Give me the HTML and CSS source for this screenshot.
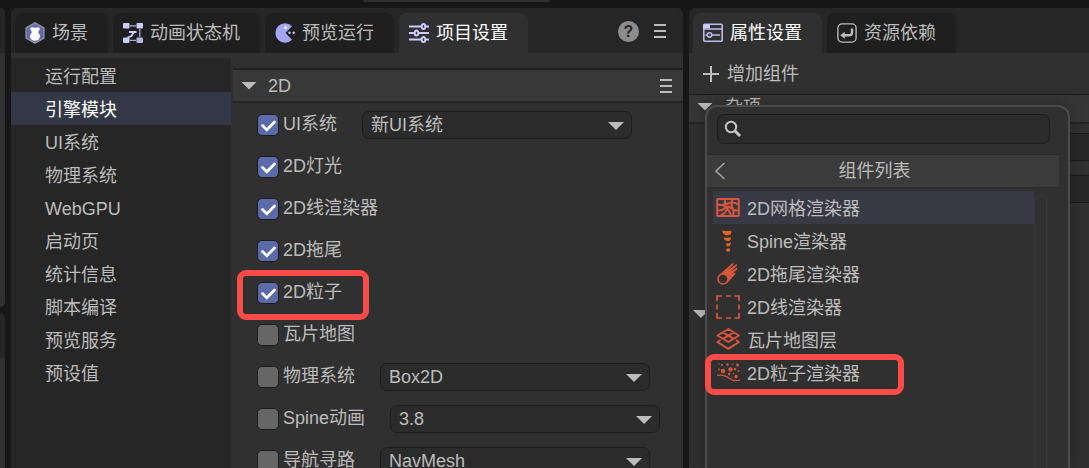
FILE: index.html
```html
<!DOCTYPE html>
<html lang="zh-CN">
<head>
    <meta charset="UTF-8">
    <meta name="viewport" content="width=device-width, initial-scale=1.0">
    <title>项目设置</title>
    <link rel="stylesheet" href="styles.css">
</head>
<body>

    <div class="top-strip"><div class="top-field"></div></div>

    <div class="workspace">
        <div class="side-docks">
            <div class="dock dock-upper"></div>
            <div class="dock dock-lower"></div>
        </div>

        <main class="panel">
            <div class="tab-bar">
                <button class="tab">
                    <svg class="icon" viewBox="0 0 20 22">
                        <path d="M10 .8l8.900 5v10.400l-8.900 5-8.900-5V5.800z" fill="#6468ad" stroke="#8f92a8" stroke-width="1.400"/>
                        <circle cx="7" cy="7" r="1.800" fill="#fff"/>
                        <circle cx="13" cy="7" r="1.800" fill="#fff"/>
                        <circle cx="10" cy="9" r="3.600" fill="#fff"/>
                        <ellipse cx="10" cy="14.300" rx="5" ry="4.400" fill="#fff"/>
                    </svg>
                    <span>场景</span>
                </button>
                <button class="tab">
                    <svg class="icon" viewBox="0 0 20 20">
                        <g fill="#c9ccff"><rect width="6.500" height="5.500" rx="1"/><rect x="13.500" width="6.500" height="5.500" rx="1"/><rect y="14.500" width="6.500" height="5.500" rx="1"/><rect x="13.500" y="14.500" width="6.500" height="5.500" rx="1" fill="#b3b6e0"/></g>
                        <path d="M7 2.800h6M16.800 6v8M7 17.300h6" fill="none" stroke="#a9acd8" stroke-width="1.300"/>
                        <path d="M6 9h7.500M10.500 9.500l-2 3.500-4 1.500" fill="none" stroke="#c9ccff" stroke-width="1.800"/>
                    </svg>
                    <span>动画状态机</span>
                </button>
                <button class="tab">
                    <svg class="icon" viewBox="0 0 20 20">
                        <path d="M17 3.200A9.700 9.700 0 1 0 17 16.800L10.500 10z" fill="#a3a6f2"/>
                        <circle cx="10.500" cy="4.500" r="1.500" fill="#fff"/>
                        <circle cx="14.500" cy="9.800" r="1.200" fill="#c9ccff"/>
                        <circle cx="18.700" cy="9.800" r="1.200" fill="#c9ccff"/>
                    </svg>
                    <span>预览运行</span>
                </button>
                <button class="tab active">
                    <svg class="icon" viewBox="0 0 20 20" fill="none" stroke="#c9ccff" stroke-width="2">
                        <path d="M0 3.500h12M17 3.500h3M0 10h5M10 10h10M0 16.500h12M17 16.500h3"/>
                        <ellipse cx="14.500" cy="3.500" rx="1.800" ry="2.600"/>
                        <ellipse cx="7.500" cy="10" rx="1.800" ry="2.600"/>
                        <ellipse cx="14.500" cy="16.500" rx="1.800" ry="2.600"/>
                    </svg>
                    <span>项目设置</span>
                </button>
                <div class="tab-tools">
                    <button class="help" aria-label="帮助">?</button>
                    <button class="menu-btn" aria-label="菜单"></button>
                </div>
            </div>

            <div class="settings">
                <nav class="sidebar">
                    <a href="#">运行配置</a>
                    <a href="#" class="selected">引擎模块</a>
                    <a href="#">UI系统</a>
                    <a href="#">物理系统</a>
                    <a href="#">WebGPU</a>
                    <a href="#">启动页</a>
                    <a href="#">统计信息</a>
                    <a href="#">脚本编译</a>
                    <a href="#">预览服务</a>
                    <a href="#">预设值</a>
                </nav>

                <section class="modules">
                    <div class="section-head">
                        <span class="arrow"></span>
                        <span class="section-title">2D</span>
                        <button class="menu-btn" aria-label="菜单"></button>
                    </div>
                    <div class="module-list">
                        <div class="module">
                            <label><input type="checkbox" checked><span>UI系统</span></label>
                            <div class="select"><select aria-label="UI系统"><option>新UI系统</option></select></div>
                        </div>
                        <div class="module">
                            <label><input type="checkbox" checked><span>2D灯光</span></label>
                        </div>
                        <div class="module">
                            <label><input type="checkbox" checked><span>2D线渲染器</span></label>
                        </div>
                        <div class="module">
                            <label><input type="checkbox" checked><span>2D拖尾</span></label>
                        </div>
                        <div class="module marked">
                            <label><input type="checkbox" checked><span>2D粒子</span></label>
                        </div>
                        <div class="module">
                            <label><input type="checkbox"><span>瓦片地图</span></label>
                        </div>
                        <div class="module">
                            <label><input type="checkbox"><span>物理系统</span></label>
                            <div class="select"><select aria-label="物理系统"><option>Box2D</option></select></div>
                        </div>
                        <div class="module">
                            <label><input type="checkbox"><span>Spine动画</span></label>
                            <div class="select"><select aria-label="Spine动画"><option>3.8</option></select></div>
                        </div>
                        <div class="module">
                            <label><input type="checkbox"><span>导航寻路</span></label>
                            <div class="select"><select aria-label="导航寻路"><option>NavMesh</option></select></div>
                        </div>
                    </div>
                </section>
            </div>
        </main>

        <aside class="panel inspector">
            <div class="tab-bar">
                <button class="tab active">
                    <svg class="icon" viewBox="0 0 20 20" fill="none" stroke="#b9bce8" stroke-width="1.600">
                        <rect x=".8" y="1.300" width="18.400" height="17" rx="1"/>
                        <path d="M1 2.500h5v2H1z" stroke="#c9ccff" stroke-width="2"/>
                        <path d="M1 6h18"/>
                        <circle cx="6.500" cy="12" r="2.200"/>
                        <path d="M9 12h8M2.500 12h1.500"/>
                    </svg>
                    <span>属性设置</span>
                </button>
                <button class="tab">
                    <svg class="icon" viewBox="0 0 22 22" fill="none" stroke="#bcbcbc">
                        <rect x="1" y="1" width="20" height="20" rx="4.500" stroke-width="1.500"/>
                        <path d="M16.500 6v4.500q0 3-3 3H7" stroke-width="2.600"/>
                        <path d="M3.500 13.500l5-3.800v7.600z" fill="#bcbcbc" stroke="none"/>
                    </svg>
                    <span>资源依赖</span>
                </button>
            </div>

            <button class="add-component">
                <svg width="18" height="18" viewBox="0 0 18 18"><path d="M9 1v16M1 9h16" stroke="#bcbcbc" stroke-width="2"/></svg>
                <span>增加组件</span>
            </button>
            <div class="prop-head"><span class="arrow"></span><span>杂项</span></div>
            <div class="prop-fields">
                <input type="text" aria-label="杂项 1">
                <input type="text" aria-label="杂项 2">
            </div>
            <div class="prop-group"><span class="arrow"></span></div>

            <div class="popup">
                <div class="search">
                    <svg width="18" height="18" viewBox="0 0 18 18" fill="none" stroke="#c4c4c4">
                        <circle cx="7" cy="7" r="5.200" stroke-width="2"/>
                        <path d="M11 11l5 5" stroke-width="3"/>
                    </svg>
                    <input type="search" aria-label="组件列表">
                </div>
                <div class="popup-head">
                    <button class="back" aria-label="返回">
                        <svg width="12" height="18" viewBox="0 0 12 18"><path d="M10.500 1L2 9l8.500 8" fill="none" stroke="#a0a0a0" stroke-width="1.600"/></svg>
                    </button>
                    <span>组件列表</span>
                </div>
                <div class="popup-body">
                    <div class="component-list">
                        <button class="component current">
                            <svg viewBox="0 0 24 24" fill="none" stroke="#d9553c" stroke-width="2">
                                <rect x="1.200" y="3" width="21.600" height="17" rx="1"/>
                                <path d="M2 8.500q5 1.500 10-1t10 1M2 14.500q4 .5 7-2.500t6 0 7 2.500M8.500 3q1.500 5-.5 8M16.500 3q-2 5 0 9t.5 8M4.500 19q5-1 7.500-8M12 13l3 6"/>
                            </svg>
                            <span>2D网格渲染器</span>
                        </button>
                        <button class="component">
                            <svg viewBox="0 0 24 24" fill="#e8651f">
                                <path d="M6.500 1.500q5 1 9 0l-.5 3.800q-3 1.700-5.500.7-3-1-3-4.500zM7.500 8.500q4 .8 7.500-.3 0 3.300-2.500 3.800-4 .3-5-3.500zM10 14.500q2.500.3 5-1-.3 4-3 4-2 0-2-3z"/>
                                <ellipse cx="12.200" cy="21" rx="2.200" ry="1.700"/>
                            </svg>
                            <span>Spine渲染器</span>
                        </button>
                        <button class="component">
                            <svg viewBox="0 0 24 24">
                                <path d="M2.500 13.500L17 .8l.8 1.200-5.500 6 8-6 1 1.200-6.500 6.500 6-4.200.8 1.500-5.500 5 3-1.500.5 1.200-8 9z" fill="#d9553c"/>
                                <circle cx="7" cy="17" r="5" fill="#303030" stroke="#d9553c" stroke-width="1.600"/>
                            </svg>
                            <span>2D拖尾渲染器</span>
                        </button>
                        <button class="component">
                            <svg viewBox="0 0 24 24" fill="none" stroke="#d9553c" stroke-width="1.700">
                                <path d="M1 6V1h5M10 1h5M18.500 1H23v5M23 9.500v5M23 18v5h-4.500M15 23h-5M6 23H1v-5M1 14.500v-5"/>
                            </svg>
                            <span>2D线渲染器</span>
                        </button>
                        <button class="component">
                            <svg viewBox="0 0 24 24" fill="none" stroke="#d9553c" stroke-width="2" stroke-linejoin="round">
                                <path d="M12.300 1L23 7.500 12.300 14 1.500 7.500zM7 4.300l10.700 6.500M17.700 4.300L7 10.800M4.500 12l-3 2 10.800 6.800L23 14l-3-2"/>
                            </svg>
                            <span>瓦片地图层</span>
                        </button>
                        <button class="component marked">
                            <svg viewBox="0 0 24 24" fill="#d9553c">
                                <circle cx="7" cy="10" r="2.200"/><circle cx="14.500" cy="8.500" r="2.200"/><circle cx="20" cy="15.500" r="1.700"/>
                                <circle cx="11.500" cy="3.500" r="1.300"/><circle cx="21.500" cy="4" r="1.500"/><circle cx="6" cy="4" r="1"/><circle cx="3" cy="3" r=".7"/>
                                <circle cx="19" cy="8" r="1.200"/><circle cx="22.500" cy="10" r=".9"/><circle cx="13" cy="13" r="1.300"/><circle cx="17" cy="3" r=".8"/><circle cx="3" cy="8.500" r=".9"/><circle cx="17.500" cy="12.500" r=".8"/>
                                <path d="M1 14.500q7-1.500 12 2.500t11 2" fill="none" stroke="#d9553c" stroke-width="1.300"/>
                            </svg>
                            <span>2D粒子渲染器</span>
                        </button>
                    </div>
                    <div class="scroll-track"></div>
                </div>
            </div>
        </aside>
    </div>

</body>
</html>
```
FILE: styles.css
```css
*, *::after {
    box-sizing: border-box;
}
body {
    margin: 0;
    height: 100vh;
    display: flex;
    flex-direction: column;
    overflow: hidden;
    background: #171717;
    color: #bcbcbc;
    font-family: "Liberation Sans", "Noto Sans CJK SC", sans-serif;
    font-size: 18px;
    line-height: 24px;
}
button, input, select {
    font: inherit;
    color: inherit;
    margin: 0;
}
button {
    padding: 0;
    border: 0;
    background: none;
    cursor: pointer;
}
svg {
    display: block;
    flex: none;
}

.top-strip {
    flex: none;
    height: 8px;
    display: flex;
    justify-content: center;
    padding-right: 177px;
}
.top-field {
    width: 187px;
    height: 2px;
    background: #303030;
    border-radius: 0 0 4px 4px;
}
.workspace {
    flex: 1;
    min-height: 0;
    display: grid;
    grid-template-columns: 5px minmax(0, 1fr) 400px;
    grid-template-rows: minmax(0, 1fr);
    gap: 6px;
}

/* docks cut by the left edge */
.side-docks {
    display: flex;
    flex-direction: column;
    gap: 6px;
}
.dock {
    background: linear-gradient(#262626 45px, #303030 45px);
}
.dock-upper {
    flex: 299;
    border-radius: 0 5px 5px 0;
}
.dock-lower {
    flex: 155;
    border-radius: 0 5px 0 0;
}

.panel {
    position: relative;
    display: flex;
    flex-direction: column;
    min-width: 0;
    overflow: hidden;
    background: #303030;
    border-radius: 7px 7px 0 0;
}
.inspector {
    border-radius: 7px 0 0 0;
}
.tab-bar {
    flex: none;
    display: flex;
    gap: 5px;
    height: 45px;
    padding: 5px 17px 0 4px;
    background: #262626;
}
.tab {
    display: flex;
    align-items: center;
    gap: 7px;
    padding: 0 20px 0 10px;
    background: #1f1f1f;
    border-radius: 8px 8px 0 0;
    white-space: nowrap;
}
.tab.active {
    background: #303030;
    color: #fff;
}
.icon {
    width: 20px;
    height: 22px;
}
.tab-tools {
    display: flex;
    align-items: center;
    gap: 15px;
    margin-left: auto;
    padding-bottom: 4px;
}
.help {
    width: 21px;
    height: 21px;
    border-radius: 50%;
    background: #8c8c8c;
    color: #262626;
    font-size: 16px;
    font-weight: bold;
    line-height: 21px;
}
.menu-btn {
    width: 12px;
    height: 14px;
    background: repeating-linear-gradient(#bcbcbc 0 2px, transparent 2px 6px);
}

.settings {
    flex: 1;
    min-height: 0;
    display: flex;
    gap: 2px;
    padding-top: 5px;
}
.sidebar {
    flex: none;
    width: 220px;
    padding-top: 1px;
    background: #262626;
}
.sidebar a {
    display: block;
    height: 33px;
    padding-left: 34px;
    color: inherit;
    line-height: 36px;
    text-decoration: none;
}
.sidebar a.selected {
    background: #323845;
    color: #fff;
}

.modules {
    flex: 1;
    min-width: 0;
    padding-top: 10px;
}
.section-head {
    display: flex;
    align-items: center;
    height: 35px;
    padding: 0 11px 0 8px;
    background: #383838;
    border-top: 2px solid #222;
    border-bottom: 2px solid #262626;
}
.section-title {
    margin-left: 11px;
}
.section-head .menu-btn {
    margin-left: auto;
}
.arrow {
    flex: none;
    width: 16px;
    height: 8px;
    background: #bcbcbc;
    clip-path: polygon(0 0, 100% 0, 50% 100%);
}
.module-list {
    padding: 1px 0 0 24px;
}
.module {
    position: relative;
    display: flex;
    align-items: center;
    gap: 25px;
    height: 42px;
}
.module label {
    display: flex;
    align-items: center;
    gap: 4px;
    white-space: nowrap;
}
.module label span {
    padding-bottom: 2px;
}
.module input {
    appearance: none;
    width: 22px;
    height: 22px;
    border: 1px solid #1c1c1c;
    border-radius: 5px;
    background: #666;
}
.module input:checked {
    background: #5b6aa8 url("data:image/svg+xml,%3Csvg xmlns='http://www.w3.org/2000/svg' viewBox='0 0 20 20'%3E%3Cpath d='M4.500 10.500l4.300 4.200 7.700-7.700' fill='none' stroke='white' stroke-width='2.800' stroke-linecap='round'/%3E%3C/svg%3E") center / 20px 20px;
}
.select {
    position: relative;
    width: 270px;
}
.select select {
    appearance: none;
    display: block;
    width: 100%;
    height: 28px;
    padding: 0 30px 0 8px;
    border: 1px solid #1c1c1c;
    border-radius: 7px;
    background: #2b2b2b;
}
.select::after {
    content: "";
    position: absolute;
    top: 11px;
    right: 8px;
    width: 16px;
    height: 8px;
    background: #bcbcbc;
    clip-path: polygon(0 0, 100% 0, 50% 100%);
    pointer-events: none;
}

/* red outline round a row */
.marked::after {
    content: "";
    position: absolute;
    border: 6px solid #f94b48;
    border-radius: 9px;
    pointer-events: none;
}
.module.marked::after {
    top: -2px;
    left: -20px;
    width: 132px;
    height: 50px;
}
.component.marked::after {
    top: -2px;
    left: -8px;
    width: 199px;
    height: 41px;
}

.add-component {
    display: flex;
    align-items: center;
    gap: 7px;
    height: 41px;
    padding-left: 13px;
}
.prop-head {
    display: flex;
    align-items: center;
    gap: 12px;
    height: 30px;
    padding: 0 0 4px 8px;
    background: #363636;
    border-top: 1px solid #1c1c1c;
    border-bottom: 2px solid #262626;
}
.prop-fields {
    display: flex;
    flex-direction: column;
    gap: 14px;
    padding: 9px 0 0 120px;
}
.prop-fields input {
    width: 100%;
    height: 28px;
    border: 1px solid #1c1c1c;
    border-right: 0;
    border-radius: 7px 0 0 7px;
    background: #282828;
}
.prop-group {
    display: flex;
    padding: 107px 0 0 4px;
}

.popup {
    position: absolute;
    top: 97px;
    right: 19px;
    bottom: 0;
    left: 16px;
    display: flex;
    flex-direction: column;
    background: #303030;
    border: 2px solid #4c4c4c;
    border-bottom: 0;
    border-radius: 12px 12px 0 0;
    box-shadow: 0 0 16px rgba(0, 0, 0, 0.3);
}
.search {
    display: flex;
    align-items: center;
    gap: 6px;
    height: 30px;
    margin: 7px 18px 10px 10px;
    padding: 0 6px;
    border: 1px solid #1c1c1c;
    border-radius: 7px;
    background: #2b2b2b;
}
.search input {
    flex: 1;
    min-width: 0;
    padding: 0;
    border: 0;
    outline: 0;
    background: none;
}
.popup-head {
    display: flex;
    align-items: center;
    height: 34px;
    margin-right: 9px;
    padding: 0 36px 0 7px;
    background: #3b3b3b;
    border-top: 1px solid #2b2b2b;
    border-bottom: 1px solid #2b2b2b;
}
.popup-head span {
    flex: 1;
    text-align: center;
}
.popup-body {
    flex: 1;
    min-height: 0;
    display: flex;
    padding: 3px 21px 0 6px;
}
.component-list {
    flex: 1;
}
.component {
    position: relative;
    display: flex;
    align-items: center;
    gap: 7px;
    width: 100%;
    height: 33px;
    padding-left: 3px;
    text-align: left;
}
.component svg {
    width: 24px;
    height: 24px;
}
.component span {
    padding-top: 2px;
}
.component.current {
    background: #373a44;
}
.scroll-track {
    width: 13px;
    margin-top: 4px;
    border: 1px solid #393939;
    border-bottom: 0;
    border-radius: 6px 6px 0 0;
}
```
